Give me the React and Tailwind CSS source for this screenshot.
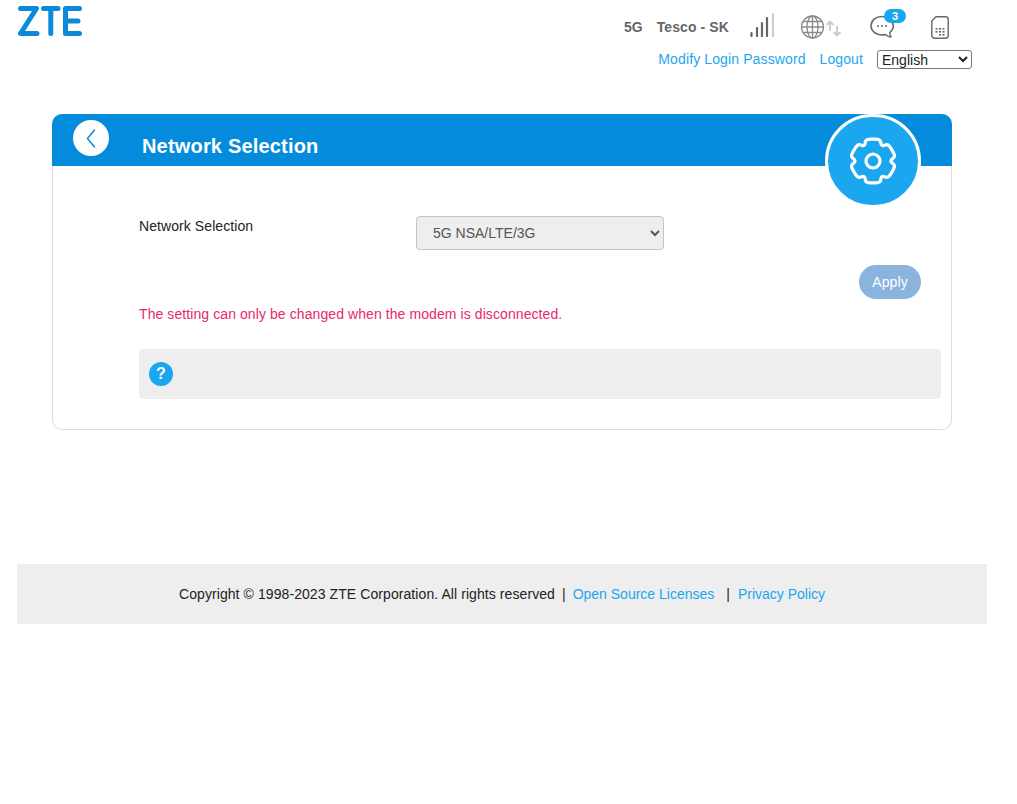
import React from "react";

function Logo() {
  return (
    <svg width="66" height="32" viewBox="0 0 66 32" fill="none" stroke="#0a8ad8" strokeWidth="5" strokeLinecap="round" strokeLinejoin="round">
      <path d="M3.500 3.500H19.500L3.500 28.500H20" />
      <path d="M26.500 3.500H41M33.800 3.500V28.500" />
      <path d="M62.500 3.500H48.500V28.500H62.500M48.500 16H61" />
    </svg>
  );
}

function Signal() {
  return (
    <svg width="24" height="24" viewBox="0 0 24 24" fill="none" strokeWidth="2.200" strokeLinecap="round">
      <g stroke="#666">
        <path d="M1.500 23V20M7 23V15M12 23V10M17 23V5" />
      </g>
      <path d="M23 23V1" stroke="#ccc" />
    </svg>
  );
}

function Globe() {
  return (
    <svg width="41" height="26" viewBox="0 0 41 26" fill="none">
      <g stroke="#8a8a8a" strokeWidth="1.300">
        <circle cx="12.500" cy="13" r="11" />
        <ellipse cx="12.500" cy="13" rx="5.500" ry="11" />
        <path d="M12.500 2V24M1.500 13H23.500M3.200 7.500H21.800M3.200 18.500H21.800" />
      </g>
      <g stroke="#c9c9c9" strokeWidth="1.800" fill="none">
        <path d="M30 17V8M26.500 11L30 7.500L33.500 11" />
        <path d="M37 12V21M33.500 18L37 21.500L40.500 18" />
      </g>
    </svg>
  );
}

function Chat() {
  return (
    <div className="relative w-[36px] h-[30px]">
      <svg className="absolute left-0 top-[6px]" width="25" height="24" viewBox="0 0 25 24" fill="none">
        <path d="M12 1.500C5.800 1.500 1 5.500 1 10.800C1 16 5.800 20 12 20C13.300 20 14.500 19.800 15.500 19.500C17 21 19 22 21 22C20 20.800 19.800 19 19.800 17.500C22 15.800 23.300 13.500 23.300 10.800C23.300 5.500 18.300 1.500 12 1.500Z" stroke="#666" strokeWidth="1.500" strokeLinejoin="round" />
        <circle cx="8" cy="11" r="1" fill="#666" />
        <circle cx="12" cy="11" r="1" fill="#666" />
        <circle cx="16" cy="11" r="1" fill="#666" />
      </svg>
      <span className="absolute left-[14px] top-0 w-[22px] h-[14px] rounded-full bg-[#1aa7f0] text-white text-[11px] leading-[14px] font-bold text-center">3</span>
    </div>
  );
}

function Sim() {
  return (
    <svg width="18" height="23" viewBox="0 0 18 23" fill="none">
      <path d="M5 0.800H14.500C16 0.800 17.200 2 17.200 3.500V19.500C17.200 21 16 22.200 14.500 22.200H3.500C2 22.200 0.800 21 0.800 19.500V5Z" stroke="#666" strokeWidth="1.400" strokeLinejoin="round" />
      <g fill="#666">
        <rect x="4.500" y="12" width="2" height="1.600" />
        <rect x="8" y="12" width="2" height="1.600" />
        <rect x="11.500" y="12" width="2" height="1.600" />
        <rect x="4.500" y="15" width="2" height="1.600" />
        <rect x="8" y="15" width="2" height="1.600" />
        <rect x="11.500" y="15" width="2" height="1.600" />
        <rect x="8" y="18" width="2" height="1.600" />
        <rect x="11.500" y="18" width="2" height="1.600" />
      </g>
    </svg>
  );
}

function gearPath() {
  const pts = [];
  for (let i = 0; i < 6; i++) {
    const a = -90 + i * 60;
    [[a - 18, 23], [a + 18, 23], [a + 30, 17]].forEach(([deg, r]) => {
      const t = (deg * Math.PI) / 180;
      pts.push([25 + r * Math.cos(t), 25 + r * Math.sin(t)]);
    });
  }
  const lerp = (p, q, k) => [p[0] + (q[0] - p[0]) * k, p[1] + (q[1] - p[1]) * k];
  let d = "";
  pts.forEach((p, i) => {
    const prev = pts[(i + pts.length - 1) % pts.length];
    const next = pts[(i + 1) % pts.length];
    const from = lerp(p, prev, 0.35);
    const to = lerp(p, next, 0.35);
    d += `${i === 0 ? "M" : "L"}${from[0].toFixed(2)} ${from[1].toFixed(2)}Q${p[0].toFixed(2)} ${p[1].toFixed(2)} ${to[0].toFixed(2)} ${to[1].toFixed(2)}`;
  });
  return d + "Z";
}

function Gear() {
  return (
    <svg width="50" height="50" viewBox="0 0 50 50" fill="none" stroke="#ffffff" strokeWidth="3.200">
      <path d={gearPath()} strokeLinejoin="round" />
      <circle cx="25" cy="25" r="7" />
    </svg>
  );
}

export default function App() {
  return (
    <div className="ml-[17px] w-[970px] font-['Liberation_Sans',Arial,sans-serif] text-[14px] text-[#222]">
      <header className="flex justify-between h-[114px]">
        <div className="pt-[5px]">
          <Logo />
        </div>
        <div className="flex flex-col items-end pr-[15px]">
          <div className="flex items-center h-[36px] mt-[9px] pr-[23px] text-[#666] font-bold">
            <span>5G</span>
            <span className="ml-[14px] tracking-[0.1px]">Tesco - SK</span>
            <span className="ml-[21px] -mt-[4px]"><Signal /></span>
            <span className="ml-[26px] -mt-[1px]"><Globe /></span>
            <span className="ml-[29px] -mt-[6px]"><Chat /></span>
            <span className="ml-[25px] mt-[1px]"><Sim /></span>
          </div>
          <div className="flex items-center h-[19px] mt-[5px] text-[#1aa7f0]">
            <a className="tracking-[0.12px]">Modify Login Password</a>
            <a className="ml-[14px] tracking-[0.1px]">Logout</a>
            <select className="ml-[14px] w-[95px] h-[19px] border border-[#767676] rounded-[3px] bg-white text-[#222] text-[14px]">
              <option>English</option>
            </select>
          </div>
        </div>
      </header>

      <section className="relative ml-[35px] w-[900px] h-[316px] border border-[#dddddd] border-t-0 rounded-[10px]">
        <div className="-mx-px h-[52px] bg-[#058bdb] rounded-t-[10px] flex">
          <div className="ml-[21px] mt-[6px] w-[36px] h-[36px] rounded-full bg-white flex items-center justify-center">
            <svg width="10" height="19" viewBox="0 0 10 19" fill="none" stroke="#058bdb" strokeWidth="1.500" strokeLinecap="round" strokeLinejoin="round">
              <path d="M8.500 1L1.500 9.500L8.500 18" />
            </svg>
          </div>
          <h1 className="ml-[33px] mt-[20px] text-[20px] leading-[24px] font-bold text-white tracking-[0.18px]">Network Selection</h1>
        </div>
        <div className="absolute left-[772px] top-0 w-[96px] h-[94px] rounded-full bg-[#1aa7f0] border-[3px] border-white flex items-center justify-center">
          <Gear />
        </div>

        <div className="pl-[86px] pr-[10px]">
          <div className="flex items-start pt-[50px]">
            <label className="w-[277px] leading-[20px] tracking-[0.08px]">Network Selection</label>
            <select className="w-[248px] h-[34px] border border-[#c4c4c4] rounded-[4px] bg-[#eeeeee] text-[#555] text-[14px] pl-[12px]">
              <option>5G NSA/LTE/3G</option>
            </select>
          </div>
          <div className="flex justify-end mt-[15px] pr-[20px]">
            <button className="w-[62px] h-[34px] rounded-full bg-[#8ab3de] text-white text-[14px] tracking-[0.1px]">Apply</button>
          </div>
          <p className="mt-[5px] leading-[20px] text-[#e8286f] tracking-[0.085px]">The setting can only be changed when the modem is disconnected.</p>
          <div className="mt-[25px] h-[50px] bg-[#eeeeee] rounded-[4px] flex items-center pl-[10px]">
            <span className="w-[24px] h-[24px] rounded-full bg-[#1aa7f0] text-white font-bold text-[16px] leading-[24px] text-center">?</span>
          </div>
        </div>
      </section>

      <footer className="mt-[134px] h-[60px] bg-[#eeeeee] flex items-center justify-center">
        <span className="tracking-[0.08px]">Copyright © 1998-2023 ZTE Corporation. All rights reserved</span>
        <span className="ml-[7px]">|</span>
        <a className="ml-[7px] text-[#1aa7f0]">Open Source Licenses</a>
        <span className="ml-[12px]">|</span>
        <a className="ml-[8px] text-[#1aa7f0]">Privacy Policy</a>
      </footer>
    </div>
  );
}
